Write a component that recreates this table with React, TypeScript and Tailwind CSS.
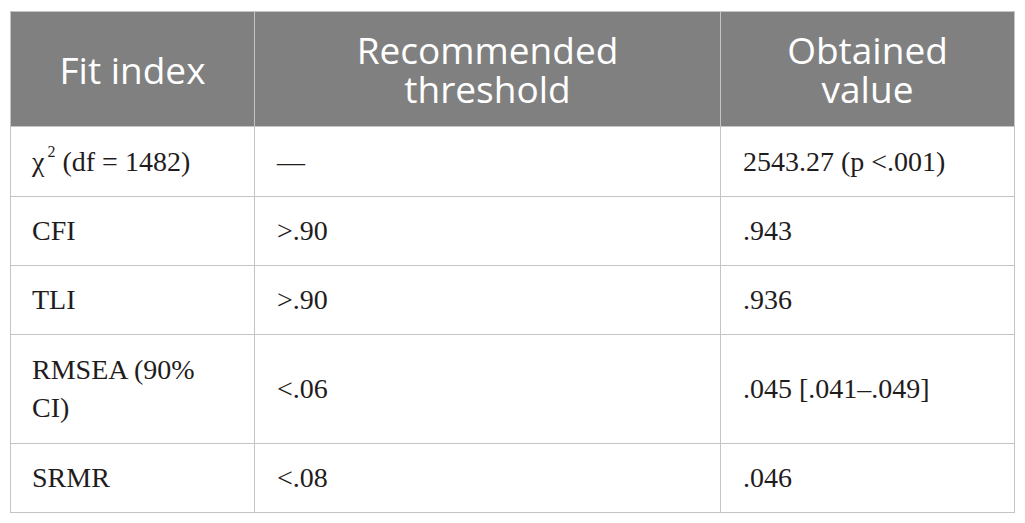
const rows: { index: React.ReactNode; threshold: string; value: string; h: string }[] = [
  {
    index: (
      <>
        χ<sup className="text-[16px] relative -top-[3px] align-super ml-[3px]">2</sup> (df = 1482)
      </>
    ),
    threshold: "—",
    value: "2543.27 (p <.001)",
    h: "h-[70px]",
  },
  { index: "CFI", threshold: ">.90", value: ".943", h: "h-[69px]" },
  { index: "TLI", threshold: ">.90", value: ".936", h: "h-[69px]" },
  {
    index: (
      <>
        RMSEA (90%
        <br />
        CI)
      </>
    ),
    threshold: "<.06",
    value: ".045 [.041–.049]",
    h: "h-[109px]",
  },
  { index: "SRMR", threshold: "<.08", value: ".046", h: "h-[69px]" },
];

export default function App() {
  return (
    <div className="bg-white w-[1025px] h-[523px] pt-[11px] pl-[10px]">
      <table className="table-fixed border-collapse w-[1004px]">
        <colgroup>
          <col className="w-[244px]" />
          <col className="w-[466px]" />
          <col className="w-[294px]" />
        </colgroup>
        <thead>
          <tr className="h-[115px] bg-[#808080] text-white font-['Open_Sans',sans-serif] text-[37px] leading-[39px]">
            <th className="border border-[#c4c4c4] font-normal text-center align-middle">Fit index</th>
            <th className="border border-[#c4c4c4] font-normal text-center align-middle">
              Recommended
              <br />
              threshold
            </th>
            <th className="border border-[#c4c4c4] font-normal text-center align-middle">
              Obtained
              <br />
              value
            </th>
          </tr>
        </thead>
        <tbody className="font-['Liberation_Serif',serif] text-[28px] leading-[38px] text-[#1f1c1d]">
          {rows.map((r, i) => (
            <tr key={i} className={r.h}>
              <td className="border border-[#c4c4c4] pl-[21px] align-middle">{r.index}</td>
              <td className="border border-[#c4c4c4] pl-[22px] align-middle">{r.threshold}</td>
              <td className="border border-[#c4c4c4] pl-[22px] align-middle">{r.value}</td>
            </tr>
          ))}
        </tbody>
      </table>
    </div>
  );
}
